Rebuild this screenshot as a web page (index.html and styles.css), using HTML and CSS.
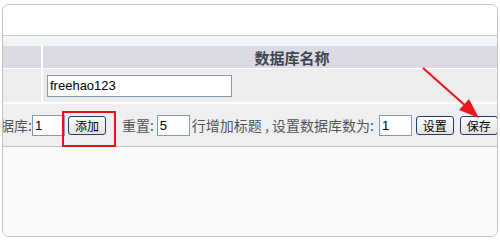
FILE: index.html
```html
<!DOCTYPE html>
<html lang="zh-CN">

<head>
  <meta charset="UTF-8">
  <title>数据库设置</title>
  <link rel="stylesheet" href="styles.css">
</head>

<body>
  <!-- 外框 -->
  <div class="panel">
    <div class="panel-top"></div>
    <div class="panel-body">
      <div class="band"></div>
      <!-- 数据库列表 -->
      <div class="db-table">
        <div class="cell head"></div>
        <div class="cell head">数据库名称</div>
        <div class="cell"></div>
        <div class="cell"><input class="txt name" type="text" value="freehao123"></div>
      </div>
      <!-- 操作栏 -->
      <div class="toolbar">
        <span>数据库:</span>
        <input class="txt num first" type="text" value="1">
        <span class="mark"><button class="btn">添加</button></span>
        <span class="reset">重置:</span>
        <input class="txt num" type="text" value="5">
        <span class="desc">行增加标题 , 设置数据库数为:</span>
        <input class="txt num last" type="text" value="1">
        <button class="btn set">设置</button>
        <button class="btn save">保存</button>
      </div>
    </div>
    <div class="panel-foot"></div>
  </div>

  <!-- 标注箭头 -->
  <svg class="arrow" width="500" height="240" viewBox="0 0 500 240">
    <line x1="423" y1="68" x2="468" y2="108" stroke="#e8161e" stroke-width="2.2" />
    <polygon points="479,118 459,110 469,99" fill="#e8161e" />
  </svg>
</body>

</html>
```

FILE: styles.css
```css
* {
  box-sizing: border-box;
}

body {
  margin: 0;
  padding: 0;
  background: #fff;
  font-family: "Noto Sans CJK SC", sans-serif;
}

.panel {
  width: 496px;
  height: 233px;
  margin: 4px 0 0 2px;
  border: 1px solid #c9bfc0;
  border-radius: 7px;
  overflow: hidden;
  background: #fafafa;

  display: flex;
  flex-direction: column;
}

.panel-top {
  flex: none;
  height: 31px;
  background: #fff;
  border-bottom: 1px solid #b9d3cf;
}

.panel-body {
  flex: none;
  width: 571px;
  margin-left: -30px;
  background: #fff;
}

.band {
  height: 10px;
  background: #f4f4f4;
}

.db-table {
  display: grid;
  grid-template-columns: 68px 498px;
  grid-template-rows: 22px 33px;
  column-gap: 2px;
  row-gap: 1px;
  margin-bottom: 2px;
}

.db-table .cell {
  background: #ededed;
  display: flex;
  align-items: center;
}

.db-table .head {
  background: #dcdbe5;
  justify-content: center;
  font-size: 15px;
  font-weight: bold;
  color: #404650;
}

.txt {
  height: 21px;
  padding: 0 2px;
  border: 1px solid #7f9db9;
  background: #fff;
  font-family: "Liberation Sans", Arial, sans-serif;
  font-size: 13px;
  color: #000;
  outline: none;
}

.txt.name {
  width: 185px;
  height: 22px;
  margin-left: 4px;
}

.txt.num {
  width: 33px;
  margin-left: 3px;
}

.txt.first {
  margin-left: 0;
}

.txt.last {
  margin-left: 5px;
}

.toolbar {
  height: 43px;
  padding-left: 13px;
  background: #efeff1;
  border-bottom: 1px solid #c4c4c4;
  font-size: 14px;
  color: #555;
  white-space: nowrap;

  display: flex;
  align-items: center;
}

.btn {
  width: 38px;
  height: 19px;
  padding: 0;
  border: 1px solid #1c3f6e;
  border-radius: 3px;
  background: linear-gradient(#fdfdfb, #e4e3dc);
  font-family: "Noto Sans CJK SC", sans-serif;
  font-size: 12px;
  line-height: 17px;
  color: #000;
}

.mark {
  position: relative;
  display: flex;
  margin-left: 3px;
}

.mark::after {
  content: "";
  position: absolute;
  left: -6px;
  top: -5px;
  width: 50px;
  height: 32px;
  border: 2px solid #e3141b;
}

.reset {
  margin-left: 16px;
}

.desc {
  margin-left: 2px;
}

.btn.set {
  margin-left: 4px;
}

.btn.save {
  margin-left: 6px;
}

.panel-foot {
  flex: 1;
  background: #fafafa;
}

.arrow {
  position: absolute;
  left: 0;
  top: 0;
  pointer-events: none;
}
```
